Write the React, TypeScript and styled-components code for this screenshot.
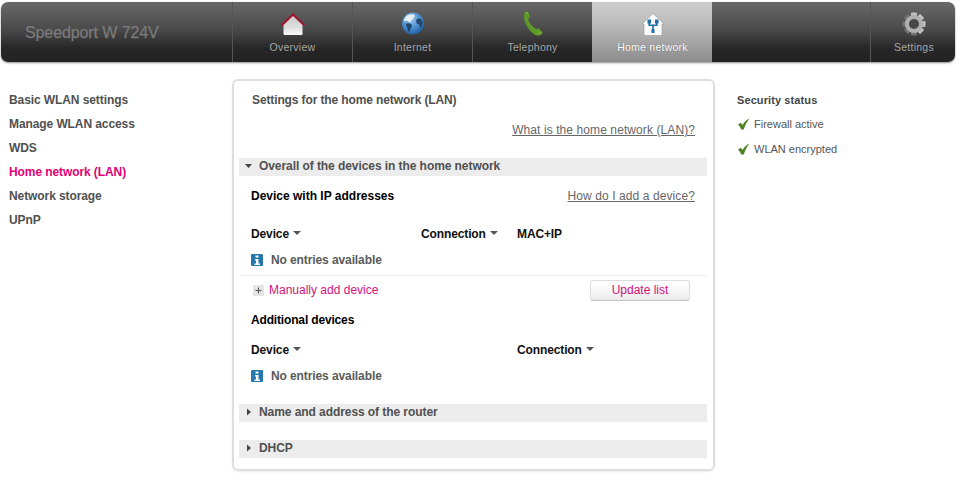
import React from "react";
import styled, { createGlobalStyle } from "styled-components";

const Global = createGlobalStyle`
  html, body { margin: 0; padding: 0; background: #fff; }
  body { font-family: "Liberation Sans", Arial, sans-serif; font-size: 12px; color: #4b4b4b; }
`;

const Page = styled.div`
  width: 961px;
  height: 495px;
  overflow: hidden;
`;

const Header = styled.header`
  display: flex;
  height: 60px;
  margin: 2px 6px 0 1px;
  border-radius: 7px;
  background: linear-gradient(#696969 0%, #4a4a4a 45%, #262626 78%, #232323 100%);
  box-shadow: 0 1px 2px rgba(0, 0, 0, 0.45);
  overflow: hidden;
`;

const Brand = styled.div`
  width: 231px;
  padding: 21px 0 0 24px;
  box-sizing: border-box;
  font-size: 16px;
  line-height: 20px;
  font-weight: 400;
  letter-spacing: -0.1px;
  color: #7b7b7b;
  -webkit-text-stroke: 0.25px #7b7b7b;
`;

const Tab = styled.div<{ $active?: boolean; $push?: boolean; $w?: number }>`
  width: ${(p) => p.$w ?? 120}px;
  box-sizing: border-box;
  display: flex;
  flex-direction: column;
  align-items: center;
  padding: 9px 0 0 ${(p) => (p.$push ? "2px" : "0")};
  margin-left: ${(p) => (p.$push ? "auto" : "0")};
  border-left: 1px solid ${(p) => (p.$active ? "transparent" : "#555")};
  background: ${(p) => (p.$active ? "linear-gradient(#cdcdcd, #bdbdbd 35%, #8c8c8c 100%)" : "none")};
  color: ${(p) => (p.$active ? "#fff" : "#a6a6a6")};
  text-shadow: ${(p) => (p.$active ? "0 0 1px rgba(60,60,60,.6)" : "none")};
`;

const TabIcon = styled.svg`
  display: block;
  width: 26px;
  height: 26px;
`;

const TabLabel = styled.span`
  margin-top: 3px;
  font-size: 10.5px;
  line-height: 14px;
  letter-spacing: 0.25px;
`;

const Main = styled.main`
  display: flex;
  align-items: flex-start;
  padding-top: 17px;
`;

const SideNav = styled.nav`
  width: 232px;
  box-sizing: border-box;
  padding: 9px 0 0 9px;
  display: flex;
  flex-direction: column;
`;

const NavItem = styled.a<{ $active?: boolean }>`
  height: 24px;
  line-height: 24px;
  font-weight: 700;
  letter-spacing: -0.09px;
  color: ${(p) => (p.$active ? "#e20074" : "#505050")};
`;

const Panel = styled.section`
  width: 483px;
  height: 392px;
  box-sizing: border-box;
  border: 2px solid #dedede;
  border-radius: 6px;
  padding: 0 6px 0 5px;
  box-shadow: 0 1px 2px rgba(0, 0, 0, 0.08);
`;

const Row = styled.div<{ $h: number }>`
  height: ${(p) => p.$h}px;
  padding: 0 12px;
  display: flex;
  align-items: center;
  justify-content: space-between;
`;

const PanelTitle = styled.h1`
  margin: 0 0 0 1px;
  font-size: 12px;
  font-weight: 700;
  letter-spacing: -0.12px;
  color: #505050;
`;

const HelpLink = styled.a`
  margin-left: auto;
  color: #666;
  text-decoration: underline;
  letter-spacing: 0.09px;
`;

const SectionBar = styled.div<{ $mt: number }>`
  height: 18px;
  margin-top: ${(p) => p.$mt}px;
  padding: 0 0 2px 5px;
  box-sizing: border-box;
  display: flex;
  align-items: center;
  background: #ececec;
  font-weight: 700;
  letter-spacing: -0.07px;
  color: #505050;
`;

const BarArrow = styled.svg`
  width: 10px;
  height: 8px;
  margin-right: 5px;
`;

const SubTitle = styled.h2<{ $tight?: boolean }>`
  margin: 0;
  font-size: 12px;
  font-weight: 700;
  letter-spacing: ${(p) => (p.$tight ? "-0.16px" : "0")};
  color: #000;
`;

const ColumnRow = styled.div<{ $cols: string; $h: number }>`
  height: ${(p) => p.$h}px;
  padding: 0 12px;
  display: grid;
  grid-template-columns: ${(p) => p.$cols};
  align-items: center;
  font-weight: 700;
  letter-spacing: -0.12px;
  color: #111;
`;

const ColumnHead = styled.span`
  display: flex;
  align-items: center;
`;

const SortArrow = styled.svg`
  width: 8px;
  height: 4px;
  margin: -2px 0 0 4px;
`;

const EmptyRow = styled.div<{ $h: number; $mb: number }>`
  height: ${(p) => p.$h}px;
  margin-bottom: ${(p) => p.$mb}px;
  padding: 0 12px;
  display: flex;
  align-items: center;
  font-weight: 700;
  letter-spacing: -0.1px;
  color: #5a5a5a;
`;

const InfoIcon = styled.svg`
  width: 12px;
  height: 12px;
  margin-right: 8px;
`;

const Divider = styled.hr`
  margin: 0;
  border: 0;
  height: 1px;
  background: #eeeeee;
`;

const AddLink = styled.a`
  display: flex;
  align-items: center;
  color: #d5107c;
`;

const PlusBox = styled.svg`
  width: 11px;
  height: 11px;
  margin: 0 5px 0 2px;
`;

const UpdateButton = styled.button`
  width: 100px;
  height: 21px;
  margin-right: 5px;
  padding: 0;
  border: 1px solid #dcdcdc;
  border-bottom-color: #c4c4c4;
  border-radius: 3px;
  background: linear-gradient(#fff, #f7f7f7 55%, #e9e9e9);
  font: 12px "Liberation Sans", Arial, sans-serif;
  color: #d5107c;
`;

const Aside = styled.aside`
  padding: 9px 0 0 22px;
`;

const AsideTitle = styled.h3`
  margin: 0 0 6px;
  height: 24px;
  line-height: 24px;
  font-size: 11px;
  font-weight: 700;
  color: #444;
  letter-spacing: 0.1px;
`;

const StatusItem = styled.div`
  height: 25px;
  display: flex;
  align-items: center;
  font-size: 11px;
  color: #555;
  margin-top: -7px;
  margin-bottom: 7px;
`;

const CheckIcon = styled.svg`
  width: 12px;
  height: 12px;
  margin: 1px 4px 0 1px;
`;

const HomeIcon = () => (
  <TabIcon viewBox="0 0 26 26">
    <defs>
      <linearGradient id="hw" x1="0" y1="0" x2="0" y2="1">
        <stop offset="0" stopColor="#c9c9c9" />
        <stop offset="0.6" stopColor="#dedede" />
        <stop offset="1" stopColor="#fafafa" />
      </linearGradient>
    </defs>
    <path d="M3.5 13.5 13 4.5l9.5 9v9.5a1 1 0 0 1-1 1h-17a1 1 0 0 1-1-1z" fill="url(#hw)" />
    <path d="M1.5 14.5 13 3.5l11.5 11" fill="none" stroke="#a3142f" strokeWidth="2" />
  </TabIcon>
);

const GlobeIcon = () => (
  <TabIcon viewBox="0 0 26 26">
    <defs>
      <radialGradient id="gb" cx="0.4" cy="0.3" r="0.8">
        <stop offset="0" stopColor="#9cc8ee" />
        <stop offset="0.6" stopColor="#3e84c6" />
        <stop offset="1" stopColor="#174f8c" />
      </radialGradient>
    </defs>
    <circle cx="13" cy="12.5" r="11" fill="url(#gb)" />
    <path d="M8 4c3-1 6-1 7 .5.6 1-1.4 1.6-1.6 3-.2 1.400-2.400.8-2.400 2.500 0 1.600-1.800 1.600-2.400.6C7.800 9.200 5 9.600 4 10.500 4 8 5.600 5 8 4z" fill="#e6eef5" />
    <path d="M7 12.500c2-.6 4.500.4 5 2 .4 1.500-1.500 2.500-1.700 4-.2 1.600-1.600 3-2.300 1.500-.6-1.400-.4-3-1.200-4-.8-1-1.400-3-.1-3.500zM17 8c1.500-1 4-.6 5 1.500 1 2 .6 5-.8 7-.8.8-1.400-.5-1.500-2-.1-1.400-2.200-1-3-2.500-.6-1.400-.8-3.200.3-4z" fill="#23466d" />
  </TabIcon>
);

const PhoneIcon = () => (
  <TabIcon viewBox="0 0 26 26">
    <path d="M5.500 1c1.200-.6 2.500-.4 3 .6l1.300 3.600c.2.800 0 1.300-.6 1.700l-1.200.9c.6 3.600 4 8 8.200 10.200l1.300-.6c.6-.3 1.200-.2 1.700.3l3 3c.6.700.4 1.600-.5 2.300-1.300 1-3 1.800-4.500 1.600C11 23 4.500 13.500 4 6c-.1-2 .4-4 1.500-5z" fill="#5f9a26" />
    <path d="M6 2c.8-.4 1.500-.2 1.800.5M18 20.500l3 2.300" stroke="#8cc34a" strokeWidth="1" fill="none" />
  </TabIcon>
);

const NetHomeIcon = () => (
  <TabIcon viewBox="0 0 26 26">
    <path d="M2 13 13 2.500 24 13h-2v10a1.500 1.500 0 0 1-1.500 1.500h-15A1.500 1.500 0 0 1 4 23V13z" fill="#fbfbfb" stroke="#8d8d8d" strokeWidth="0.5" />
    <g fill="#1e6ea8">
      <rect x="7.500" y="8.500" width="3.500" height="4" />
      <rect x="15" y="8.500" width="3.500" height="4" />
      <rect x="11.500" y="18" width="3" height="4" />
      <rect x="12.200" y="14" width="1.600" height="5" />
    </g>
    <path d="M9.200 12v2.200h7.600V12" fill="none" stroke="#1e6ea8" strokeWidth="1.600" />
  </TabIcon>
);

const GearIcon = () => {
  const teeth = [0, 45, 90, 135];
  return (
    <TabIcon viewBox="0 0 26 26">
      <defs>
        <linearGradient id="gr" x1="0" y1="0" x2="0" y2="1">
          <stop offset="0" stopColor="#c4c4c4" />
          <stop offset="1" stopColor="#6e6e6e" />
        </linearGradient>
      </defs>
      <g fill="url(#gr)">
        {teeth.map((a) => (
          <rect key={a} x="10" y="1.500" width="6" height="23" rx="1" transform={`rotate(${a} 13 13)`} />
        ))}
      </g>
      <circle cx="13" cy="13" r="7" fill="none" stroke="#b0b0b0" strokeWidth="4" />
      <circle cx="13" cy="13" r="5" fill="#484848" />
    </TabIcon>
  );
};

const ArrowDown = () => (
  <BarArrow viewBox="0 0 10 8">
    <path d="M1 2h7L4.500 6z" fill="#444" />
  </BarArrow>
);

const ArrowRight = () => (
  <BarArrow viewBox="0 0 10 8">
    <path d="M3 .5 7 4l-4 3.500z" fill="#444" />
  </BarArrow>
);

const Sort = () => (
  <SortArrow viewBox="0 0 8 4">
    <path d="M0 0h8L4 4z" fill="#555" />
  </SortArrow>
);

const Info = () => (
  <InfoIcon viewBox="0 0 12 12">
    <rect width="12" height="12" rx="1" fill="#2578ad" />
    <path d="M4.500 1.500h3v2h-3zM4 5h3.500v4.500H9v1.500H3.500V9.500H5V6.500H4z" fill="#fff" />
  </InfoIcon>
);

const Plus = () => (
  <PlusBox viewBox="0 0 11 11">
    <rect width="11" height="11" fill="#e4e4e4" />
    <path d="M5.500 2.500v6M2.500 5.500h6" stroke="#555" strokeWidth="1" />
  </PlusBox>
);

const Check = () => (
  <CheckIcon viewBox="0 0 12 12">
    <path d="M0 6.500 2.800 4.800 4.600 7C6 4.300 8.200 1.800 11.500.5 9 3.500 7 7.200 5.800 11.500L3.200 11.500C2.500 9.500 1.400 7.800 0 6.500z" fill="#4c8224" />
  </CheckIcon>
);

const nav = ["Basic WLAN settings", "Manage WLAN access", "WDS", "Home network (LAN)", "Network storage", "UPnP"];

export default function App() {
  return (
    <Page>
      <Global />
      <Header>
        <Brand>Speedport W 724V</Brand>
        <Tab>
          <HomeIcon />
          <TabLabel>Overview</TabLabel>
        </Tab>
        <Tab>
          <GlobeIcon />
          <TabLabel>Internet</TabLabel>
        </Tab>
        <Tab>
          <PhoneIcon />
          <TabLabel>Telephony</TabLabel>
        </Tab>
        <Tab $active>
          <NetHomeIcon />
          <TabLabel>Home network</TabLabel>
        </Tab>
        <Tab $push $w={85}>
          <GearIcon />
          <TabLabel>Settings</TabLabel>
        </Tab>
      </Header>
      <Main>
        <SideNav>
          {nav.map((n) => (
            <NavItem key={n} $active={n === "Home network (LAN)"}>
              {n}
            </NavItem>
          ))}
        </SideNav>
        <Panel>
          <Row $h={38}>
            <PanelTitle>Settings for the home network (LAN)</PanelTitle>
          </Row>
          <Row $h={22}>
            <HelpLink>What is the home network (LAN)?</HelpLink>
          </Row>
          <SectionBar $mt={17}>
            <ArrowDown />
            Overall of the devices in the home network
          </SectionBar>
          <Row $h={40}>
            <SubTitle>Device with IP addresses</SubTitle>
            <HelpLink>How do I add a device?</HelpLink>
          </Row>
          <ColumnRow $h={36} $cols="170px 96px 1fr">
            <ColumnHead>
              Device
              <Sort />
            </ColumnHead>
            <ColumnHead>
              Connection
              <Sort />
            </ColumnHead>
            <ColumnHead>MAC+IP</ColumnHead>
          </ColumnRow>
          <EmptyRow $h={16} $mb={7}>
            <Info />
            No entries available
          </EmptyRow>
          <Divider />
          <Row $h={28}>
            <AddLink>
              <Plus />
              Manually add device
            </AddLink>
            <UpdateButton>Update list</UpdateButton>
          </Row>
          <Row $h={32}>
            <SubTitle $tight>Additional devices</SubTitle>
          </Row>
          <ColumnRow $h={28} $cols="266px 1fr">
            <ColumnHead>
              Device
              <Sort />
            </ColumnHead>
            <ColumnHead>
              Connection
              <Sort />
            </ColumnHead>
          </ColumnRow>
          <EmptyRow $h={24} $mb={0}>
            <Info />
            No entries available
          </EmptyRow>
          <SectionBar $mt={16}>
            <ArrowRight />
            Name and address of the router
          </SectionBar>
          <SectionBar $mt={18}>
            <ArrowRight />
            DHCP
          </SectionBar>
        </Panel>
        <Aside>
          <AsideTitle>Security status</AsideTitle>
          <StatusItem>
            <Check />
            Firewall active
          </StatusItem>
          <StatusItem>
            <Check />
            WLAN encrypted
          </StatusItem>
        </Aside>
      </Main>
    </Page>
  );
}
